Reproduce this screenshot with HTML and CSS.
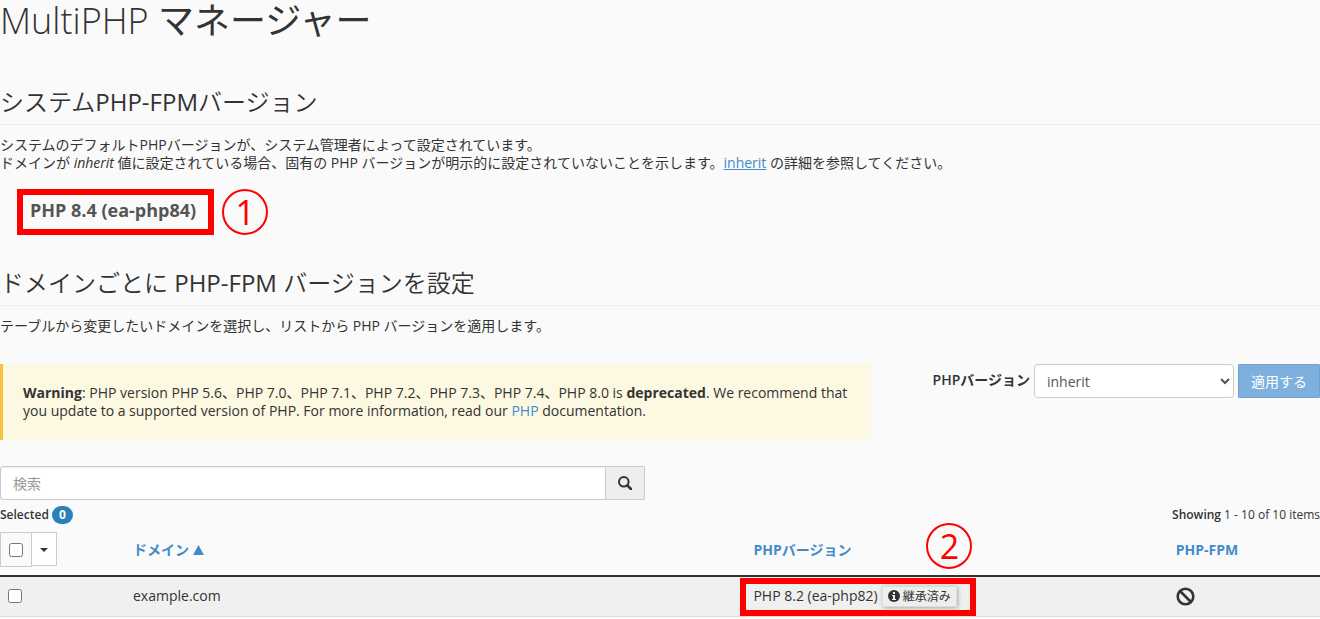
FILE: index.html
```html
<!DOCTYPE html>
<html lang="ja">
<head>
    <meta charset="UTF-8">
    <meta name="viewport" content="width=device-width, initial-scale=1.0">
    <title>MultiPHP マネージャー</title>
    <link rel="stylesheet" href="styles.css">
</head>
<body>
    <h1>MultiPHP <span class="title-ja">マネージャー</span></h1>

    <section class="system">
        <h2>システム<b>PHP-FPM</b>バージョン</h2>
        <p>システムのデフォルトPHPバージョンが、システム管理者によって設定されています。<br>
        ドメインが <em>inherit</em> 値に設定されている場合、固有の PHP バージョンが明示的に設定されていないことを示します。<a class="underlined" href="#inherit">inherit</a> の詳細を参照してください。</p>
        <div class="system-version">
            <strong class="version-box">PHP 8.4 (ea-php84)</strong>
            <span class="marker">1</span>
        </div>
    </section>

    <section class="domains">
        <h2>ドメインごとに <b>PHP-FPM</b> バージョンを設定</h2>
        <p>テーブルから変更したいドメインを選択し、リストから PHP バージョンを適用します。</p>

        <div class="toolbar">
            <div class="warning"><strong>Warning</strong>: PHP version PHP 5.6、PHP 7.0、PHP 7.1、PHP 7.2、PHP 7.3、PHP 7.4、PHP 8.0 is <strong>deprecated</strong>. We recommend that you update to a supported version of PHP. For more information, read our <a href="#php">PHP</a> documentation.</div>
            <form class="apply-form">
                <label for="version">PHPバージョン</label>
                <select id="version" name="version">
                    <option value="inherit">inherit</option>
                    <option value="ea-php82">PHP 8.2 (ea-php82)</option>
                    <option value="ea-php84">PHP 8.4 (ea-php84)</option>
                </select>
                <button type="button" class="apply">適用する</button>
            </form>
        </div>

        <form class="search">
            <input type="text" name="search" placeholder="検索" aria-label="検索">
            <button type="button" aria-label="検索">
                <svg width="14" height="14" viewBox="0 0 14 14" fill="none" stroke="#333">
                    <circle cx="5.8" cy="5.8" r="4.8" stroke-width="2"/>
                    <path d="M9.3 9.3l3.7 3.7" stroke-width="2.6" stroke-linecap="round"/>
                </svg>
            </button>
        </form>

        <div class="counts">
            <span><b>Selected</b> <span class="badge">0</span></span>
            <span><b>Showing</b> 1 - 10 of 10 items</span>
        </div>

        <table>
            <thead>
                <tr>
                    <th class="col-check">
                        <div class="select-group">
                            <label class="select-all"><input type="checkbox" aria-label="すべて選択"></label>
                            <button type="button" aria-label="選択メニュー"><span class="caret"></span></button>
                        </div>
                    </th>
                    <th class="col-domain"><a href="#domain">ドメイン <svg width="11" height="10" viewBox="0 0 11 10"><path d="M5.5 0L11 10H0z" fill="#428bca"/></svg></a></th>
                    <th class="col-version"><a href="#version">PHPバージョン</a><span class="marker marker-over">2</span></th>
                    <th class="col-fpm"><a href="#fpm">PHP-FPM</a></th>
                </tr>
            </thead>
            <tbody>
                <tr>
                    <td><input type="checkbox" aria-label="example.com"></td>
                    <td>example.com</td>
                    <td class="version-cell">
                        <div class="version-row">
                            <span>PHP 8.2 (ea-php82)</span>
                            <button type="button" class="inherited">
                                <svg width="12" height="12" viewBox="0 0 12 12">
                                    <circle cx="6" cy="6" r="6" fill="#333"/>
                                    <path d="M5 2h2v2H5zM4 5h3v4h1v1H4V9h1V6H4z" fill="#eee"/>
                                </svg>継承済み</button>
                        </div>
                    </td>
                    <td>
                        <svg class="ban" width="19" height="19" viewBox="0 0 19 19" fill="none" stroke="#333" stroke-width="2.6">
                            <circle cx="9.5" cy="9.5" r="7.8"/>
                            <path d="M4 4l11 11"/>
                        </svg>
                    </td>
                </tr>
            </tbody>
        </table>
    </section>
</body>
</html>
```
FILE: styles.css
```css
*, *::after {
    box-sizing: border-box;
}

body {
    margin: 0;
    background-color: #fafafa;
    color: #333;
    font-family: "Open Sans", "Noto Sans CJK JP", sans-serif;
    font-size: 14px;
    line-height: 18px;
}

button, input, select {
    font-family: inherit;
    color: #333;
}

a {
    color: #428bca;
    text-decoration: none;
}

a.underlined {
    text-decoration: underline;
}

h1 {
    margin: 0 0 44px;
    font-size: 36px;
    font-weight: 300;
    line-height: 42px;
}

.title-ja {
    font-weight: 400;
}

h2 {
    margin: 0 0 11px;
    padding-bottom: 6px;
    border-bottom: 1px solid #eee;
    font-size: 24px;
    font-weight: 350;
    line-height: 32px;
}

h2 b {
    font-weight: 500;
}

p {
    margin: 0;
}

.system-version {
    display: flex;
    gap: 8px;
    margin: 17px 0 32px 17px;
}

.version-box {
    padding: 5px 12px 9px 7px;
    border: 6px solid #f00;
    color: #555;
    font-size: 18px;
    line-height: 20px;
}

/* Numbered red circles */
.marker {
    width: 46px;
    height: 46px;
    border: 2px solid #f00;
    border-radius: 50%;
    color: #f00;
    font-size: 34px;
    font-weight: 400;
    line-height: 42px;
    text-align: center;
}

.toolbar {
    display: flex;
    justify-content: space-between;
    align-items: flex-start;
    margin: 29px 0 26px;
}

.warning {
    flex: 0 0 66%;
    padding: 20px;
    border-left: 3px solid #f6c342;
    background-color: #fdf8e1;
}

.apply-form {
    display: flex;
    gap: 4px;
}

.apply-form label {
    font-weight: 600;
    line-height: 32px;
}

.apply-form select {
    width: 200px;
    height: 34px;
    padding: 6px 8px;
    border: 1px solid #ccc;
    border-radius: 4px;
    background-color: #fff;
    color: #555;
    font-size: 14px;
}

.apply {
    height: 34px;
    padding: 0 12px;
    border: 1px solid #6fa4d4;
    border-radius: 1px;
    background-color: #7eb0dd;
    color: #fff;
    font-size: 14px;
}

.search {
    display: flex;
    width: 645px;
    max-width: 100%;
}

.search input {
    flex: 1;
    height: 34px;
    padding: 6px 12px;
    border: 1px solid #ccc;
    border-right: 0;
    border-radius: 4px 0 0 4px;
    background-color: #fff;
    box-shadow: inset 0 1px 1px rgba(0, 0, 0, 0.075);
    font-size: 14px;
}

.search input::placeholder {
    color: #999;
}

.search button {
    display: flex;
    align-items: center;
    justify-content: center;
    width: 40px;
    padding: 0;
    border: 1px solid #ccc;
    border-radius: 0 1px 1px 0;
    background-color: #eee;
}

.counts {
    display: flex;
    justify-content: space-between;
    margin: 6px 0 8px;
    font-size: 12px;
}

.counts b {
    font-weight: 600;
}

.badge {
    display: inline-block;
    padding: 0 7px;
    border-radius: 9px;
    background-color: #2a80b9;
    color: #fff;
    font-weight: 700;
}

table {
    width: 100%;
    border-collapse: collapse;
    table-layout: fixed;
}

th, td {
    padding: 0 8px;
    text-align: left;
}

th {
    position: relative;
    height: 44px;
    padding-bottom: 8px;
    border-bottom: 2px solid #333;
    font-weight: 700;
}

td {
    height: 40px;
    border-bottom: 1px solid #ddd;
    background-color: #f0f0f0;
}

.col-check {
    width: 125px;
    padding-left: 0;
}

.col-domain {
    width: 47%;
}

.col-version {
    width: 32%;
}

input[type="checkbox"] {
    display: block;
    width: 14px;
    height: 14px;
    margin: 0;
}

.select-group {
    display: flex;
}

.select-all {
    display: flex;
    align-items: center;
    justify-content: center;
    width: 32px;
    height: 35px;
    border: 1px solid #ccc;
}

.select-group button {
    width: 25px;
    height: 34px;
    padding: 0;
    border: 1px solid #ccc;
    border-left: 0;
    border-radius: 0 1px 1px 0;
    background-color: #fff;
}

.caret {
    display: inline-block;
    border-top: 4px solid #333;
    border-right: 4px solid transparent;
    border-left: 4px solid transparent;
    vertical-align: middle;
}

.marker-over {
    position: absolute;
    top: -9px;
    left: 181px;
}

.version-cell {
    position: relative;
}

/* Red frame drawn over the cell */
.version-cell::after {
    content: "";
    position: absolute;
    top: 1px;
    left: -5px;
    width: 236px;
    height: 38px;
    border: 6px solid #f00;
    pointer-events: none;
}

.version-row {
    display: flex;
    align-items: center;
    gap: 4px;
}

.inherited {
    display: flex;
    align-items: center;
    gap: 3px;
    height: 21px;
    padding: 0 5px;
    border: 1px solid #ddd;
    border-radius: 1px;
    background-color: #eee;
    box-shadow: 1px 1px 4px rgba(0, 0, 0, 0.3);
    font-size: 12px;
}

.ban {
    display: block;
}
```
